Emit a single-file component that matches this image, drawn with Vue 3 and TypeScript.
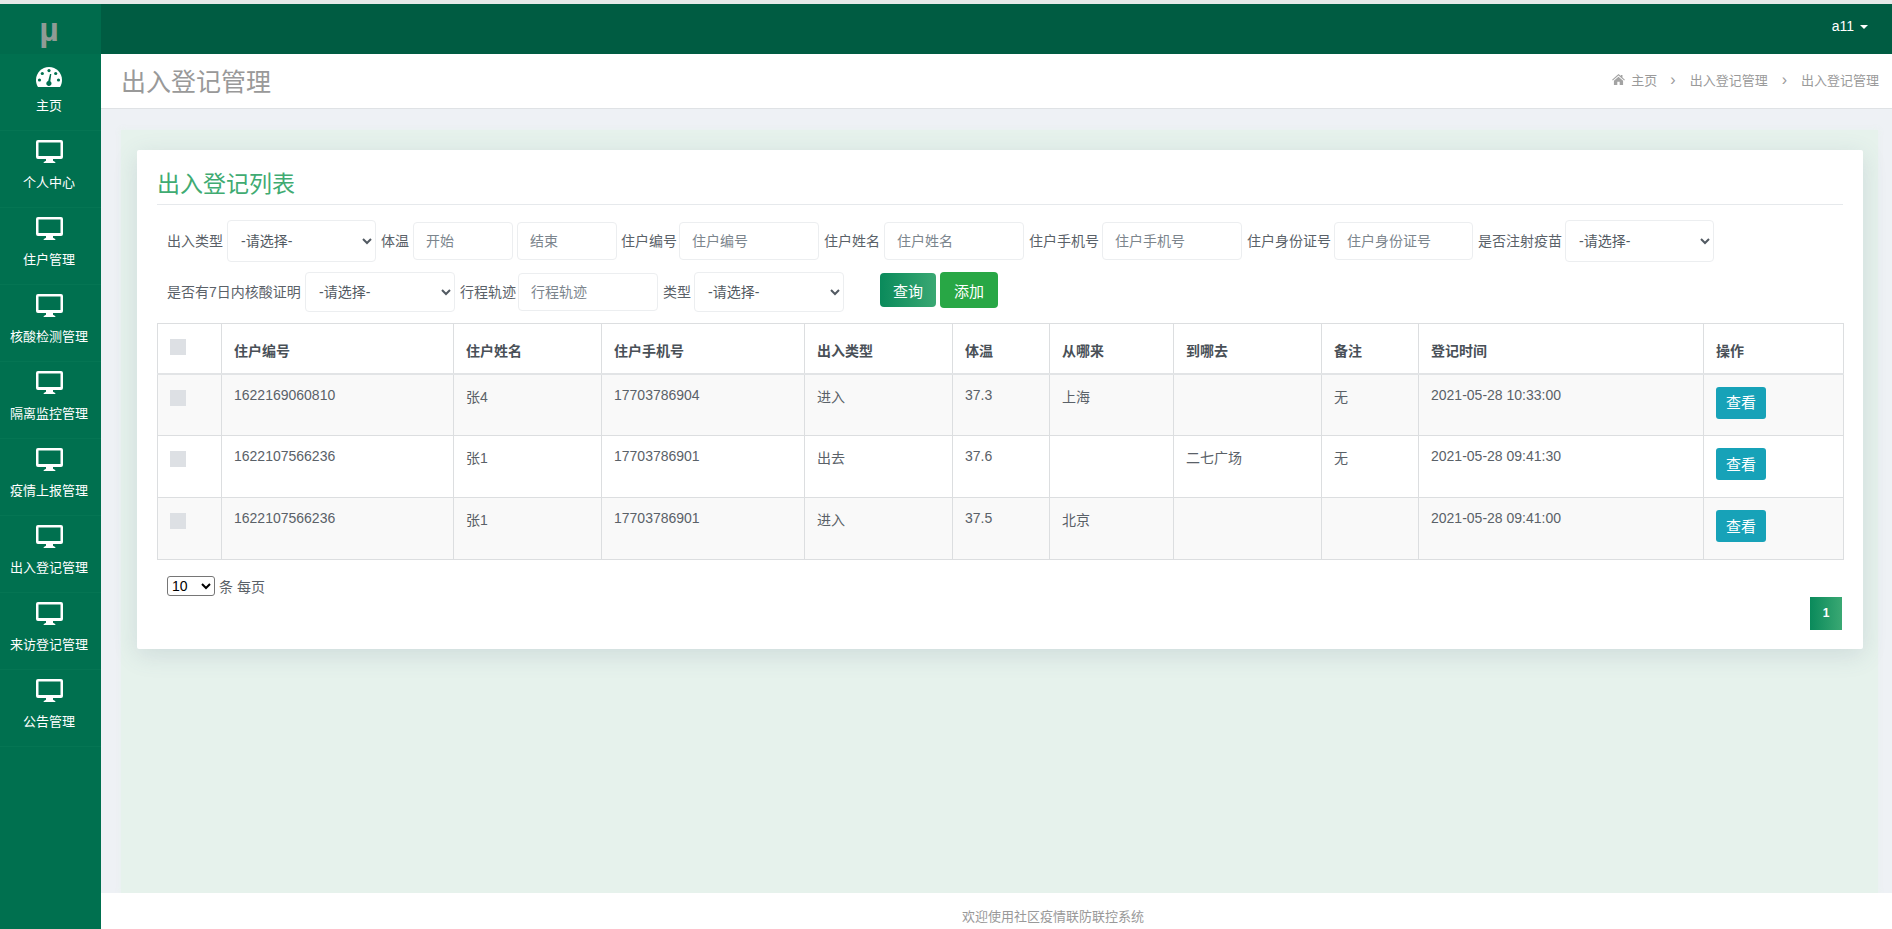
<script setup lang="ts">
interface Field { label: string; kind: 'select' | 'input' | 'pair'; ph?: string; lw: number; w: number }
interface Row { id: string; name: string; phone: string; type: string; temp: string; from: string; to: string; note: string; time: string }

const navItems: string[] = ['个人中心', '住户管理', '核酸检测管理', '隔离监控管理', '疫情上报管理', '出入登记管理', '来访登记管理', '公告管理']
const firstLine: Field[] = [
  { label: '出入类型', kind: 'select', lw: 56, w: 149 },
  { label: '体温', kind: 'pair', lw: 28, w: 100 },
  { label: '住户编号', kind: 'input', ph: '住户编号', lw: 54, w: 140 },
  { label: '住户姓名', kind: 'input', ph: '住户姓名', lw: 56, w: 140 },
  { label: '住户手机号', kind: 'input', ph: '住户手机号', lw: 69, w: 140 },
  { label: '住户身份证号', kind: 'input', ph: '住户身份证号', lw: 83, w: 139 },
  { label: '是否注射疫苗', kind: 'select', lw: 83, w: 149 }
]
const secondLine: Field[] = [
  { label: '是否有7日内核酸证明', kind: 'select', lw: 134, w: 150 },
  { label: '行程轨迹', kind: 'input', ph: '行程轨迹', lw: 54, w: 140 },
  { label: '类型', kind: 'select', lw: 27, w: 150 }
]
const columns: { title: string; w: number }[] = [
  { title: '', w: 64 }, { title: '住户编号', w: 232 }, { title: '住户姓名', w: 148 }, { title: '住户手机号', w: 203 },
  { title: '出入类型', w: 148 }, { title: '体温', w: 97 }, { title: '从哪来', w: 124 }, { title: '到哪去', w: 148 },
  { title: '备注', w: 97 }, { title: '登记时间', w: 285 }, { title: '操作', w: 140 }
]
const rows: Row[] = [
  { id: '1622169060810', name: '张4', phone: '17703786904', type: '进入', temp: '37.3', from: '上海', to: '', note: '无', time: '2021-05-28 10:33:00' },
  { id: '1622107566236', name: '张1', phone: '17703786901', type: '出去', temp: '37.6', from: '', to: '二七广场', note: '无', time: '2021-05-28 09:41:30' },
  { id: '1622107566236', name: '张1', phone: '17703786901', type: '进入', temp: '37.5', from: '北京', to: '', note: '', time: '2021-05-28 09:41:00' }
]
</script>

<template>
  <div class="shell">
    <aside class="side">
      <div class="logo">µ</div>
      <a class="nav nav-first">
        <svg class="ico-gauge" viewBox="0 0 26 20" width="26" height="20">
          <path fill="#fff" d="M13 0C5.8 0 0 5.8 0 13c0 2.6.7 5 2 7h22c1.300-2 2-4.400 2-7C26 5.800 20.200 0 13 0z" />
          <g fill="#00704f">
            <circle cx="13" cy="3.600" r="1.600" /><circle cx="6.300" cy="6.500" r="1.600" /><circle cx="19.700" cy="6.500" r="1.600" />
            <circle cx="3.500" cy="13" r="1.600" /><circle cx="22.500" cy="13" r="1.600" />
            <path d="M15.300 7l-1 7.200a2.600 2.600 0 1 1-2.100-.3L14 7z" />
          </g>
        </svg>
        <span>主页</span>
      </a>
      <a v-for="item in navItems" :key="item" class="nav">
        <svg class="ico-desk" viewBox="0 0 27 23" width="27" height="23">
          <path fill="#fff" fill-rule="evenodd" d="M2 0h23a2 2 0 0 1 2 2v15a2 2 0 0 1-2 2H2a2 2 0 0 1-2-2V2a2 2 0 0 1 2-2zM2.500 2.500V16h22V2.500z" />
          <path fill="#fff" d="M10 19h7v1.800c0 .6 2.500.6 2.500 2.200h-12c0-1.600 2.500-1.600 2.500-2.200z" />
        </svg>
        <span>{{ item }}</span>
      </a>
    </aside>

    <div class="right">
      <header class="topbar">
        <span class="user">a11<i class="caret"></i></span>
      </header>
      <div class="pagehead">
        <h1>出入登记管理</h1>
        <nav class="crumbs">
          <svg viewBox="0 0 14 12" width="13" height="11"><path fill="#a3a3a3" d="M7 0l2.600 2.300V1h1.700v2.800L14 6.200l-.8.900L7 1.700.8 7.100 0 6.200zM2 7.300 7 3l5 4.300V12H8.300V8.500H5.700V12H2z" /></svg>
          <span class="c-home">主页</span>
          <span class="sep">›</span>
          <span>出入登记管理</span>
          <span class="sep">›</span>
          <span>出入登记管理</span>
        </nav>
      </div>

      <main class="main">
        <section class="panel">
          <section class="card">
            <h2>出入登记列表</h2>
            <div class="filters line-one">
              <template v-for="f in firstLine" :key="f.label">
                <label :style="{ width: f.lw + 'px' }">{{ f.label }}</label>
                <select v-if="f.kind === 'select'" class="ctl sel" :style="{ width: f.w + 'px' }"><option>-请选择-</option></select>
                <template v-else-if="f.kind === 'pair'">
                  <input class="ctl" placeholder="开始" :style="{ width: f.w + 'px' }" />
                  <input class="ctl tight" placeholder="结束" :style="{ width: f.w + 'px' }" />
                </template>
                <input v-else class="ctl" :placeholder="f.ph" :style="{ width: f.w + 'px' }" />
              </template>
            </div>
            <div class="filters line-two">
              <template v-for="f in secondLine" :key="f.label">
                <label :style="{ width: f.lw + 'px' }">{{ f.label }}</label>
                <select v-if="f.kind === 'select'" class="ctl sel" :style="{ width: f.w + 'px' }"><option>-请选择-</option></select>
                <input v-else class="ctl" :placeholder="f.ph" :style="{ width: f.w + 'px' }" />
              </template>
              <button class="btn btn-q">查询</button>
              <button class="btn btn-a">添加</button>
            </div>

            <table class="grid">
              <colgroup><col v-for="c in columns" :key="c.title" :style="{ width: c.w + 'px' }" /></colgroup>
              <thead>
                <tr>
                  <th v-for="c in columns" :key="c.title">
                    <i v-if="!c.title" class="check"></i>
                    <template v-else>{{ c.title }}</template>
                  </th>
                </tr>
              </thead>
              <tbody>
                <tr v-for="(r, i) in rows" :key="i">
                  <td><i class="check"></i></td>
                  <td>{{ r.id }}</td>
                  <td class="cn">{{ r.name }}</td>
                  <td>{{ r.phone }}</td>
                  <td class="cn">{{ r.type }}</td>
                  <td>{{ r.temp }}</td>
                  <td class="cn">{{ r.from }}</td>
                  <td class="cn">{{ r.to }}</td>
                  <td class="cn">{{ r.note }}</td>
                  <td>{{ r.time }}</td>
                  <td><button class="view">查看</button></td>
                </tr>
              </tbody>
            </table>

            <div class="pager-size">
              <select class="size"><option>10</option></select>
              <span>条 每页</span>
            </div>
            <div class="pager"><a class="page-on">1</a></div>
          </section>
        </section>
      </main>

      <footer class="foot">欢迎使用社区疫情联防联控系统</footer>
    </div>
  </div>
</template>

<style>
html, body { margin: 0; overflow: hidden; }
</style>

<style scoped>
.shell {
  height: 929px;
  box-sizing: border-box;
  padding-top: 4px;
  background: #e6e9e8;
  display: flex;
  font-family: "Liberation Sans", "Noto Sans CJK SC", sans-serif;
  font-size: 14px;
  color: #5a6168;
}
.side { width: 101px; flex: none; background: #00704f; }
.logo {
  height: 50px;
  box-sizing: border-box;
  padding-right: 3px;
  background: #006b4c;
  color: #8f9b96;
  font-size: 34px;
  font-weight: 700;
  line-height: 50px;
  text-align: center;
}
.nav {
  display: flex;
  flex-direction: column;
  align-items: center;
  height: 77px;
  box-sizing: border-box;
  border-bottom: 1px solid #057553;
  color: #fff;
  font-size: 13px;
  padding: 9px 3px 0 0;
}
.nav span { margin-top: 11px; line-height: 18px; }
.nav-first { padding-top: 13px; }
.nav-first span { margin-top: 10px; }
.ico-gauge { display: block; }
.ico-desk { display: block; }
.right { flex: 1; min-width: 0; display: flex; flex-direction: column; }
.topbar {
  height: 50px;
  flex: none;
  background: #005c42;
  display: flex;
  align-items: center;
  justify-content: flex-end;
  padding-right: 24px;
  box-sizing: border-box;
}
.user { color: #fff; font-size: 14px; margin-top: -6px; }
.caret {
  display: inline-block;
  margin-left: 6px;
  vertical-align: middle;
  border-top: 4px solid #fff;
  border-left: 4px solid transparent;
  border-right: 4px solid transparent;
}
.pagehead {
  height: 55px;
  flex: none;
  box-sizing: border-box;
  background: #fff;
  border-bottom: 1px solid #dfe2e5;
  display: flex;
  align-items: center;
  justify-content: space-between;
  padding: 0 13px 3px 20px;
}
.pagehead h1 { margin: 0; font-size: 25px; font-weight: 400; color: #999; }
.crumbs { display: flex; align-items: center; font-size: 13px; color: #9a9a9a; }
.c-home { margin-left: 6px; margin-right: -1px; }
.sep { margin: 0 14px; font-size: 16px; line-height: 14px; }
.main { flex: 1; min-height: 0; background: #eef1f5; padding: 21px 14px 0 20px; }
.panel { height: 100%; box-sizing: border-box; background: #e6f2ec; padding: 20px 15px 0 16px; box-shadow: 0 0 6px rgba(230, 242, 236, .9); }
.card {
  height: 499px;
  box-sizing: border-box;
  background: #fff;
  padding: 15px 20px 0;
  border-radius: 2px;
  box-shadow: 0 6px 24px rgba(80, 100, 130, .16);
  position: relative;
}
.card h2 {
  margin: 0;
  height: 39px;
  border-bottom: 1px solid #e6e9ec;
  font-size: 23px;
  font-weight: 400;
  line-height: 38px;
  color: #40ab72;
}
.filters { display: flex; align-items: center; padding-left: 10px; }
.filters label { flex: none; margin-right: 4px; line-height: 20px; white-space: nowrap; }
.filters .ctl + label { margin-left: 5px; }
.line-one { height: 42px; margin-top: 15px; }
.line-two { height: 40px; margin-top: 10px; }
.ctl {
  flex: none;
  box-sizing: border-box;
  height: 38px;
  border: 1px solid #eceef0;
  border-radius: 4px;
  background: #fff;
  padding: 0 12px;
  font: inherit;
  color: #525a62;
  outline: none;
}
.ctl + .ctl { margin-left: 4px; }
.ctl.tight { margin-right: -1px; }
.ctl::placeholder { color: #7c858d; opacity: 1; }
.sel { height: 100%; padding: 0 9px; }
.btn {
  height: 36px;
  border: 0;
  border-radius: 4px;
  color: #fff;
  font: inherit;
  font-size: 15px;
  padding: 0;
  flex: none;
  align-self: flex-start;
}
.btn-q { width: 56px; margin-left: 36px; height: 34px; margin-top: 1px; background: linear-gradient(90deg, #0a8a5b, #3aa873); }
.btn-a { width: 58px; margin-left: 4px; background: #28a745; }
.grid {
  width: 1686px;
  margin-top: 11px;
  table-layout: fixed;
  border-collapse: collapse;
  border: 1px solid #dcdee0;
}
.grid th, .grid td { border: 1px solid #dcdee0; padding: 0 12px; text-align: left; box-sizing: border-box; }
.grid th {
  height: 50px;
  border-bottom: 2px solid #e2e4e6;
  padding-top: 4px;
  font-weight: 700;
  color: #495057;
  vertical-align: middle;
}
.grid th .check { margin-bottom: 7px; }
.grid td { height: 62px; vertical-align: top; padding-top: 10px; line-height: 21px; }
.grid tbody tr:nth-child(odd) td { background: #f9f9f9; }
.grid td.cn { padding-top: 12px; }
.grid td:last-child { padding-top: 12px; }
.check { display: block; width: 16px; height: 16px; background: #dde0e4; }
.grid td .check { margin-top: 5px; }
.view {
  display: block;
  width: 50px;
  height: 32px;
  border: 0;
  border-radius: 3px;
  background: #17a2b8;
  color: #fff;
  font: inherit;
  font-size: 15px;
  padding: 0;
}
.pager-size { display: flex; align-items: center; gap: 4px; padding-left: 10px; margin-top: 15px; height: 22px; }
.size { width: 48px; height: 20px; font-family: "Liberation Sans", sans-serif; font-size: 14px; color: #000; background: #fff; border: 1px solid #767676; border-radius: 3px; padding: 0; }
.pager { display: flex; justify-content: flex-end; margin-top: 0; padding-right: 1px; }
.page-on {
  width: 32px;
  height: 33px;
  line-height: 33px;
  text-align: center;
  color: #fff;
  font-size: 12px;
  font-weight: 700;
  background: linear-gradient(90deg, #0a8a5b, #3aa873);
}
.foot {
  height: 36px;
  flex: none;
  box-sizing: border-box;
  background: #fff;
  color: #999;
  font-size: 13px;
  line-height: 18px;
  padding: 15px 0 0 113px;
  text-align: center;
}
</style>
